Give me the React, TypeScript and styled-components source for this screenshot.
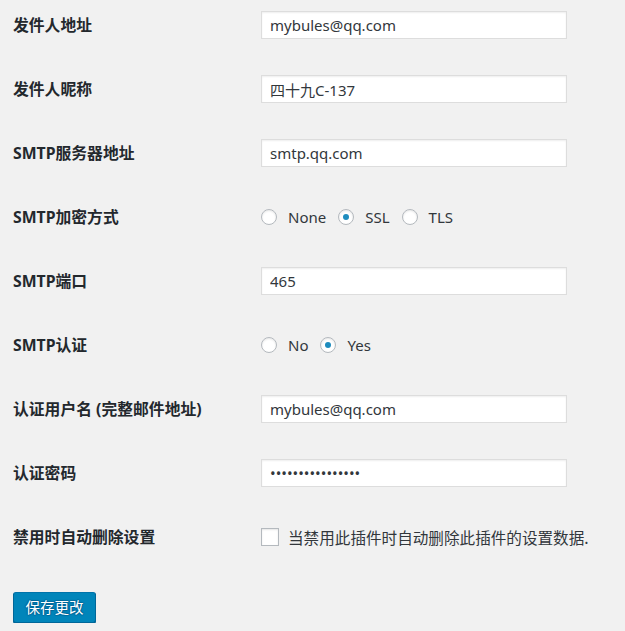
import React from "react";
import styled, { createGlobalStyle } from "styled-components";

const Global = createGlobalStyle`
  html, body { margin: 0; padding: 0; background: #f1f1f1; }
  body {
    font-family: "Noto Sans", "Noto Sans CJK SC", sans-serif;
    color: #32373c;
    font-size: 14px;
  }
`;

const Page = styled.form`
  padding: 11px 0 0 13px;
  width: 612px;
`;

const Table = styled.div`
  display: flex;
  flex-direction: column;
  gap: 36px;
`;

const Row = styled.div`
  display: grid;
  grid-template-columns: 248px 1fr;
  align-items: center;
  height: 28px;
`;

const Label = styled.label`
  font-family: "Noto Sans", "Noto Sans CJK SC", sans-serif;
  font-weight: 700;
  font-size: 15.8px;
  color: #23282d;
  line-height: 1.3;
  white-space: nowrap;
`;

const TextInput = styled.input`
  box-sizing: border-box;
  width: 306px;
  height: 28px;
  padding: 0 8px;
  margin: 0;
  border: 1px solid #ddd;
  box-shadow: inset 0 1px 2px rgba(0, 0, 0, 0.07);
  background: #fff;
  color: #32373c;
  font-family: "Noto Sans", "Noto Sans CJK SC", sans-serif;
  font-size: 15px;
  outline: none;
`;

const Options = styled.div`
  display: flex;
  align-items: center;
`;

const Option = styled.label`
  display: flex;
  align-items: center;
  margin-right: 12px;
  font-size: 15px;
  color: #32373c;
`;

const RadioCircle = styled.span<{ $checked?: boolean }>`
  box-sizing: border-box;
  width: 16px;
  height: 16px;
  border-radius: 50%;
  border: 1px solid #b4b9be;
  background: #fff;
  box-shadow: inset 0 1px 2px rgba(0, 0, 0, 0.1);
  margin-right: 11px;
  display: flex;
  align-items: center;
  justify-content: center;
  &::after {
    content: "";
    display: ${(p) => (p.$checked ? "block" : "none")};
    width: 6px;
    height: 6px;
    border-radius: 50%;
    background: #1e8cbe;
  }
`;

const CheckBox = styled.span`
  box-sizing: border-box;
  width: 18px;
  height: 18px;
  border: 1px solid #b4b9be;
  background: #fff;
  box-shadow: inset 0 1px 2px rgba(0, 0, 0, 0.1);
  margin-right: 9px;
`;

const CheckText = styled.span`
  font-size: 15.6px;
  color: #32373c;
  font-family: "Noto Sans CJK SC", sans-serif;
`;

const SaveButton = styled.button`
  margin-top: 41px;
  box-sizing: border-box;
  width: 83px;
  height: 31px;
  padding: 0 0 2px;
  border: 1px solid;
  border-color: #0073aa #006799 #006799;
  border-radius: 3px;
  background: #0085ba;
  box-shadow: 0 1px 0 #006799;
  color: #fff;
  font-family: "Noto Sans CJK SC", sans-serif;
  font-size: 14.5px;
  text-shadow: 0 -1px 1px #006799, 1px 0 1px #006799, 0 1px 1px #006799, -1px 0 1px #006799;
  cursor: pointer;
`;

type RadioProps = { options: string[]; selected: string };
const RadioGroup = ({ options, selected }: RadioProps) => (
  <Options>
    {options.map((o) => (
      <Option key={o}>
        <RadioCircle $checked={o === selected} />
        {o}
      </Option>
    ))}
  </Options>
);

export default function App() {
  return (
    <>
      <Global />
      <Page onSubmit={(e) => e.preventDefault()}>
        <Table>
          <Row>
            <Label>发件人地址</Label>
            <TextInput defaultValue="mybules@qq.com" />
          </Row>
          <Row>
            <Label>发件人昵称</Label>
            <TextInput defaultValue="四十九C-137" />
          </Row>
          <Row>
            <Label>SMTP服务器地址</Label>
            <TextInput defaultValue="smtp.qq.com" />
          </Row>
          <Row>
            <Label>SMTP加密方式</Label>
            <RadioGroup options={["None", "SSL", "TLS"]} selected="SSL" />
          </Row>
          <Row>
            <Label>SMTP端口</Label>
            <TextInput defaultValue="465" />
          </Row>
          <Row>
            <Label>SMTP认证</Label>
            <RadioGroup options={["No", "Yes"]} selected="Yes" />
          </Row>
          <Row>
            <Label>认证用户名 (完整邮件地址)</Label>
            <TextInput defaultValue="mybules@qq.com" />
          </Row>
          <Row>
            <Label>认证密码</Label>
            <TextInput type="password" defaultValue="abcdefghijklmnop" />
          </Row>
          <Row>
            <Label>禁用时自动删除设置</Label>
            <Options>
              <CheckBox />
              <CheckText>当禁用此插件时自动删除此插件的设置数据.</CheckText>
            </Options>
          </Row>
        </Table>
        <SaveButton type="submit">保存更改</SaveButton>
      </Page>
    </>
  );
}
